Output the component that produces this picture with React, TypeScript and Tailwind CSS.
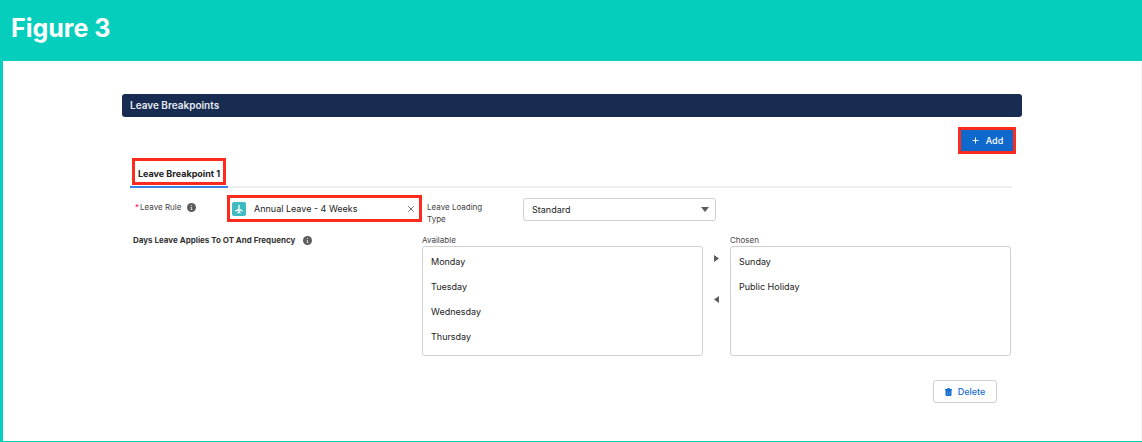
import React, { useState } from 'react';
import { Plus, X } from 'lucide-react';
import { cx } from 'class-variance-authority';

const AVAILABLE = ['Monday', 'Tuesday', 'Wednesday', 'Thursday'];
const CHOSEN = ['Sunday', 'Public Holiday'];

function InfoIcon() {
  return (
    <svg viewBox="0 0 16 16" className="size-[9px] shrink-0" role="img" aria-label="Info">
      <circle cx="8" cy="8" r="8" fill="#5c5c5c" />
      <circle cx="8" cy="4.6" r="1.2" fill="#ddd" />
      <path d="M6.5 7h2.300v4h.9v1.300H6.500V11h.8V8.300h-.8z" fill="#ddd" />
    </svg>
  );
}

function LeaveRuleIcon() {
  return (
    <svg viewBox="0 0 28 28" className="size-[14px] shrink-0" aria-hidden="true">
      <rect width="28" height="28" rx="4" fill="#3ebbc0" />
      <path
        d="M14 5c.8 0 1.300 1.200 1.300 2.600v5.800l6.700 4v1.800l-6.700-1.600v2.200l2.400 1.800v1.200L14 22.200l-3.700.6v-1.200l2.400-1.800v-2.200L6 19.200v-1.800l6.700-4V7.600C12.700 6.200 13.200 5 14 5z"
        fill="#fff"
      />
    </svg>
  );
}

function TrashIcon() {
  return (
    <svg viewBox="0 0 14 16" className="h-2 w-[7px] shrink-0" aria-hidden="true">
      <path d="M4.500 0h5v2H14v2.600H0V2h4.500zM1 4.600h12V14a2 2 0 0 1-2 2H3a2 2 0 0 1-2-2z" fill="#1b6fd0" />
      <path d="M5 7.500v6M9 7.500v6" stroke="#5c9be0" strokeWidth="1.200" />
    </svg>
  );
}

interface PicklistProps {
  id: string;
  label: string;
  items: string[];
}

function Picklist({ id, label, items }: PicklistProps) {
  return (
    <div className="flex min-w-0 flex-col">
      <label htmlFor={id} className="text-[8px] leading-3 text-[#444]">
        {label}
      </label>
      <select
        id={id}
        multiple
        size={4}
        className="h-[110px] w-full appearance-none overflow-hidden rounded-[3px] border border-[#d0d0d0] bg-white pt-[9px] text-[9px] text-[#222] outline-none"
      >
        {items.map((item) => (
          <option key={item} className="h-[25px] px-2 py-0">
            {item}
          </option>
        ))}
      </select>
    </div>
  );
}

export default function App() {
  const [rule, setRule] = useState('Annual Leave - 4 Weeks');

  return (
    <div className="flex min-h-screen flex-col bg-[#05cfbc] pb-px pl-[3px] font-['Inter',sans-serif] text-[#222]">
      <header className="flex h-[61px] items-center pb-1 pl-2">
        <h1 className="text-[25px] font-bold text-white">Figure 3</h1>
      </header>

      <main className="flex-1 border-r border-[#f3f3f3] bg-white pt-[33px] pb-9">
        <section className="mx-auto max-w-[900px]">
          <h2 className="flex h-[23px] items-center rounded-[3px] bg-[#182c52] px-2 text-[10px] font-semibold text-[#e8ebf0]">
            Leave Breakpoints
          </h2>

          <div className="pr-[10px] pl-2">
            <div className="mt-[10px] -mr-1 flex justify-end">
              <button
                type="button"
                className="flex h-[27px] w-[58px] items-center justify-center gap-1.5 border-3 border-[#fb2c1d] bg-[#0f69cd] text-[9px] font-medium text-white"
              >
                <Plus size={9} strokeWidth={2.5} />
                Add
              </button>
            </div>

            <div role="tablist" className="mt-1 flex border-b-2 border-[#eeeeee]">
              <button
                type="button"
                role="tab"
                aria-selected="true"
                className="-mb-[2px] border-b-2 border-[#3b82e8] px-[2px] pb-px"
              >
                <span className="flex h-[27px] items-center border-3 border-[#fb2c1d] px-[3px] pt-1 text-[9px] font-bold">
                  Leave Breakpoint 1
                </span>
              </button>
            </div>

            <form onSubmit={(e) => e.preventDefault()}>
              <div className="mt-[7px] grid grid-cols-[97fr_195fr_101fr_193fr_296fr]">
                <div className="flex items-center gap-1.5 self-start pt-1.5 pl-[5px] text-[8px] leading-3 text-[#444]">
                  <label htmlFor="leave-rule">
                    <span className="mr-px text-[#ea001e]">*</span>Leave Rule
                  </label>
                  <InfoIcon />
                </div>
                <div className="flex h-[27px] min-w-0 items-center border-3 border-[#fb2c1d] pr-[3px] pl-[2px]">
                  <LeaveRuleIcon />
                  <input
                    id="leave-rule"
                    type="text"
                    value={rule}
                    onChange={(e) => setRule(e.target.value)}
                    className="ml-2 min-w-0 flex-1 text-[9px] outline-none"
                  />
                  <button type="button" aria-label="Clear" onClick={() => setRule('')} className="text-[#555]">
                    <X size={10} strokeWidth={2} />
                  </button>
                </div>
                <label htmlFor="loading-type" className="pt-1.5 pr-8 pl-[5px] text-[8px] leading-3 text-[#444]">
                  Leave Loading Type
                </label>
                <div className="relative mt-[3px] h-[23px]">
                  <select
                    id="loading-type"
                    className="block h-full w-full appearance-none rounded-[3px] border border-[#d0d0d0] bg-white px-2 text-[9px] outline-none"
                  >
                    <option>Standard</option>
                  </select>
                  <svg
                    viewBox="0 0 8 5"
                    className="pointer-events-none absolute top-[9px] right-[7px] h-[5px] w-2"
                    aria-hidden="true"
                  >
                    <path d="M0 0h8L4 5z" fill="#5c5c5c" />
                  </svg>
                </div>
              </div>

              <div className="mt-[9px] grid grid-cols-[292fr_281fr_27fr_281fr_1fr]">
                <div className="flex items-center gap-2 self-start pl-[3px] text-[8px] leading-3 font-bold text-[#333]">
                  Days Leave Applies To OT And Frequency
                  <InfoIcon />
                </div>
                <Picklist id="available-days" label="Available" items={AVAILABLE} />
                <div className="flex flex-col items-center pt-5">
                  <MoveButton label="Move to Chosen" />
                  <MoveButton label="Move to Available" back />
                </div>
                <Picklist id="chosen-days" label="Chosen" items={CHOSEN} />
              </div>

              <div className="mt-6 flex justify-end pr-[15px]">
                <button
                  type="button"
                  className="flex h-[23px] w-16 items-center justify-center gap-1.5 rounded-[3px] border border-[#d0d0d0] text-[9px] font-medium text-[#1b6fd0]"
                >
                  <TrashIcon />
                  Delete
                </button>
              </div>
            </form>
          </div>
        </section>
      </main>
    </div>
  );
}

function MoveButton({ label, back }: { label: string; back?: boolean }) {
  return (
    <button type="button" aria-label={label} className={cx('flex h-2 items-center', back && 'mt-[33px]')}>
      <svg viewBox="0 0 5 7" className="h-[7px] w-[5px]" aria-hidden="true">
        <path d={back ? 'M5 0v7L0 3.500z' : 'M0 0v7l5-3.500z'} fill="#5c5c5c" />
      </svg>
    </button>
  );
}
